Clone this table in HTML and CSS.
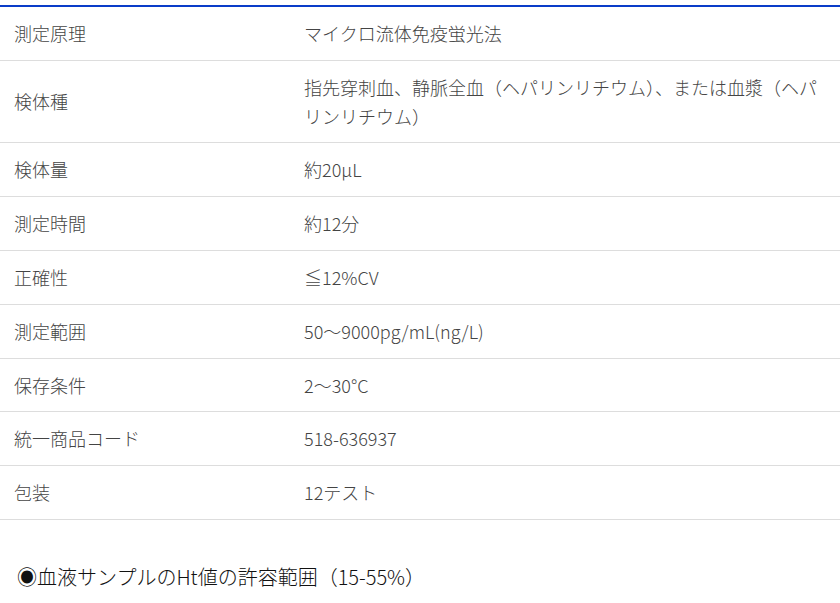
FILE: index.html
```html
<!DOCTYPE html>
<html lang="ja">
<head>
<meta charset="utf-8">
<title>製品仕様</title>
<link rel="stylesheet" href="styles.css">
</head>
<body>
<div class="spec">
  <div class="row"><div class="label">測定原理</div><div class="value">マイクロ流体免疫蛍光法</div></div>
  <div class="row"><div class="label">検体種</div><div class="value">指先穿刺血、静脈全血（ヘパリンリチウム）、または血漿（ヘパリンリチウム）</div></div>
  <div class="row"><div class="label">検体量</div><div class="value">約20μL</div></div>
  <div class="row"><div class="label">測定時間</div><div class="value">約12分</div></div>
  <div class="row"><div class="label">正確性</div><div class="value">≦12%CV</div></div>
  <div class="row"><div class="label">測定範囲</div><div class="value">50〜9000pg/mL(ng/L)</div></div>
  <div class="row"><div class="label">保存条件</div><div class="value">2〜30°C</div></div>
  <div class="row"><div class="label">統一商品コード</div><div class="value">518-636937</div></div>
  <div class="row"><div class="label">包装</div><div class="value">12テスト</div></div>
</div>
<p class="note">◉血液サンプルのHt値の許容範囲（15-55%）</p>
</body>
</html>
```

FILE: styles.css
```css
html, body {
  margin: 0;
  padding: 0;
  background: #ffffff;
}
body {
  font-family: "Noto Sans CJK JP", "Noto Sans", sans-serif;
  font-size: 18px;
  font-weight: 300;
  line-height: 1.6;
  color: #444444;
}
.spec {
  margin-top: 5px;
  border-top: 2px solid #0a3cc8;
}
.row {
  display: grid;
  grid-template-columns: 290px 1fr;
  align-items: center;
  border-bottom: 1px solid #dddddd;
}
.label, .value {
  padding: 12px 10px 12px 14px;
}
.note {
  margin: 42px 0 0 17px;
  font-size: 20px;
  line-height: 1.5;
  color: #111111;
}
```
